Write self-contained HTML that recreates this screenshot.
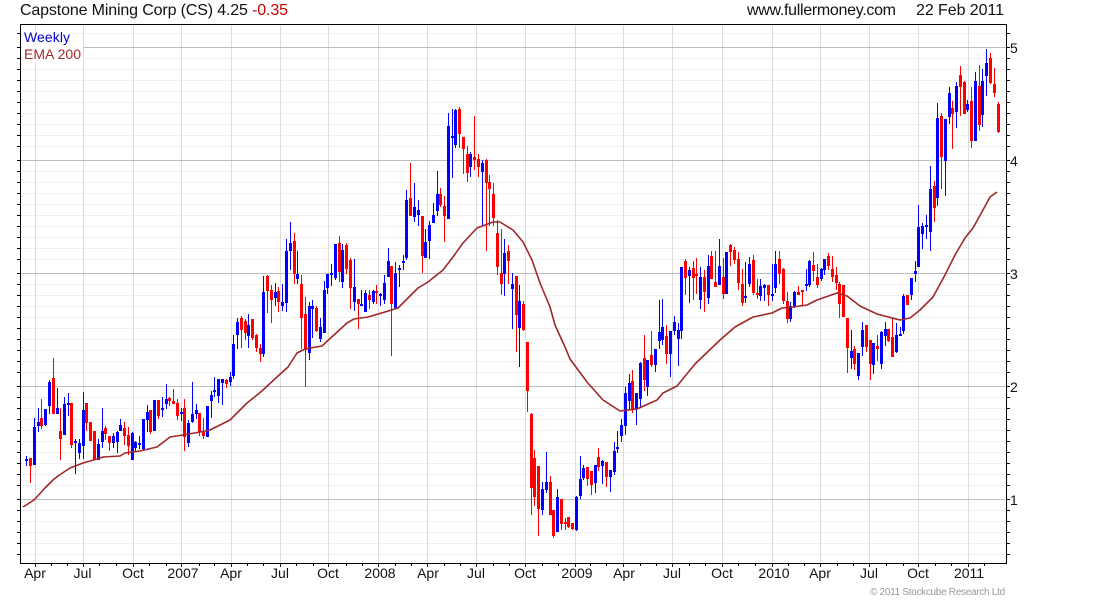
<!DOCTYPE html>
<html lang="en">
<head>
<meta charset="utf-8">
<title>Capstone Mining Corp (CS)</title>
<style>
html,body{margin:0;padding:0;background:#fff;}
body{width:1100px;height:600px;overflow:hidden;position:relative;}
svg{position:absolute;left:0;top:0;display:block;}
text{font-family:"Liberation Sans",Arial,sans-serif;}
</style>
</head>
<body>
<svg width="1100" height="600" viewBox="0 0 1100 600" xmlns="http://www.w3.org/2000/svg">
<rect width="1100" height="600" fill="#fff"/>
<!-- minor horizontals -->
<path fill="none" stroke="#efefef" stroke-width="1" d="M21 33.5H1006M21 58.5H1006M21 69.5H1006M21 80.5H1006M21 91.5H1006M21 102.5H1006M21 113.5H1006M21 124.5H1006M21 135.5H1006M21 146.5H1006M21 171.5H1006M21 182.5H1006M21 193.5H1006M21 204.5H1006M21 215.5H1006M21 226.5H1006M21 237.5H1006M21 248.5H1006M21 259.5H1006M21 284.5H1006M21 295.5H1006M21 306.5H1006M21 317.5H1006M21 328.5H1006M21 339.5H1006M21 350.5H1006M21 361.5H1006M21 372.5H1006M21 397.5H1006M21 408.5H1006M21 419.5H1006M21 430.5H1006M21 441.5H1006M21 452.5H1006M21 463.5H1006M21 474.5H1006M21 485.5H1006M21 510.5H1006M21 521.5H1006M21 532.5H1006M21 543.5H1006M21 554.5H1006"/>
<!-- verticals -->
<path fill="none" stroke="#dcdcdc" stroke-width="1" d="M35.5 25V563M83.5 25V563M133.5 25V563M181.5 25V563M231.5 25V563M280.5 25V563M328.5 25V563M378.5 25V563M427.5 25V563M476.5 25V563M525.5 25V563M575.5 25V563M623.5 25V563M672.5 25V563M722.5 25V563M772.5 25V563M820.5 25V563M869.5 25V563M918.5 25V563M968.5 25V563"/>
<!-- major horizontals -->
<path fill="none" stroke="#bdbdbd" stroke-width="1" d="M21 47.5H1006M21 160.5H1006M21 273.5H1006M21 386.5H1006M21 499.5H1006"/>
<!-- legend backgrounds -->
<rect x="21" y="31" width="49" height="16" fill="#fff"/>
<rect x="21" y="47" width="62" height="15" fill="#fff"/>
<text x="24" y="42" font-size="14" fill="#0000cc" textLength="46">Weekly</text>
<text x="24" y="59" font-size="14" fill="#a52a2a" textLength="57">EMA 200</text>

<!-- wicks -->
<path fill="none" stroke="#0000ff" stroke-width="1" d="M26.5 456V466M34.5 418V465M38.5 408V432M45.5 409V426M49.5 380V414M57.5 388V414M64.5 397V435M68.5 393V416M75.5 439V474M79.5 439V459M83.5 392V459M98.5 439V460M102.5 408V448M113.5 433V448M117.5 431V453M120.5 419V431M132.5 432V460M135.5 441V452M139.5 436V449M143.5 419V451M147.5 405V432M154.5 400V431M162.5 397V417M166.5 384V409M181.5 408V421M188.5 420V447M192.5 382V423M196.5 404V419M207.5 406V437M211.5 391V418M214.5 377V397M218.5 379V403M222.5 379V405M230.5 372V386M233.5 335V379M237.5 318V349M248.5 314V348M263.5 276V357M275.5 283V306M282.5 284V311M286.5 239V312M290.5 222V270M297.5 251V284M309.5 302V360M312.5 300V338M320.5 318V342M324.5 281V333M327.5 274V294M331.5 264V286M335.5 244V280M342.5 244V288M354.5 259V311M361.5 290V306M365.5 290V312M373.5 290V304M380.5 293V306M384.5 275V304M388.5 248V277M395.5 262V308M399.5 265V287M403.5 255V270M406.5 190V260M414.5 183V222M418.5 200V226M425.5 229V258M429.5 221V259M433.5 203V223M437.5 171V216M448.5 113V219M452.5 109V178M455.5 109V148M470.5 152V177M482.5 160V226M504.5 239V296M512.5 273V329M519.5 285V367M542.5 482V515M546.5 452V493M557.5 489V532M576.5 496V531M580.5 456V499M583.5 465V480M595.5 465V493M602.5 460V484M610.5 470V492M614.5 442V475M617.5 431V453M621.5 419V442M625.5 387V435M629.5 374V410M636.5 393V425M640.5 362V408M647.5 360V396M655.5 349V372M659.5 300V349M662.5 299V345M670.5 331V377M674.5 316V335M678.5 323V366M681.5 267V339M689.5 267V303M700.5 267V309M708.5 255V304M719.5 239V285M726.5 252V294M745.5 262V303M749.5 257V287M760.5 279V301M764.5 284V301M772.5 264V301M775.5 251V293M790.5 302V322M794.5 291V308M806.5 269V291M809.5 260V287M821.5 268V281M824.5 259V275M851.5 330V369M858.5 353V380M862.5 322V356M873.5 343V374M881.5 331V369M885.5 322V346M896.5 323V353M900.5 327V336M903.5 294V334M911.5 278V300M915.5 261V282M918.5 205V267M922.5 223V249M926.5 215V239M930.5 166V251M937.5 103V206M945.5 119V196M949.5 87V124M956.5 82V128M967.5 100V112M975.5 72V141M982.5 69V127M986.5 49V96"/>
<path fill="none" stroke="#ff0000" stroke-width="1" d="M30.5 458V483M41.5 399V429M53.5 358V414M60.5 408V460M71.5 403V448M86.5 403V431M90.5 422V441M94.5 431V460M105.5 426V440M109.5 436V451M124.5 422V445M128.5 427V455M150.5 410V434M158.5 400V419M169.5 397V406M173.5 389V404M177.5 399V420M184.5 399V451M199.5 413V436M203.5 418V439M226.5 379V388M241.5 316V348M245.5 319V340M252.5 319V340M256.5 334V352M260.5 344V362M267.5 275V313M271.5 285V323M278.5 287V312M294.5 233V284M301.5 275V349M305.5 297V387M316.5 306V332M339.5 236V282M346.5 243V274M350.5 258V309M358.5 299V329M369.5 290V309M376.5 285V304M391.5 266V356M410.5 163V216M422.5 216V273M440.5 188V207M444.5 196V242M459.5 107V148M463.5 137V174M467.5 146V182M474.5 116V170M478.5 154V177M486.5 159V251M489.5 175V226M493.5 183V226M497.5 220V275M501.5 229V295M508.5 245V284M516.5 276V352M523.5 301V331M527.5 342V412M531.5 413V515M534.5 450V506M538.5 466V536M550.5 476V515M553.5 510V538M561.5 499V530M565.5 518V530M568.5 517V528M572.5 523V530M587.5 467V486M591.5 471V495M598.5 448V471M606.5 462V487M632.5 370V413M644.5 335V391M651.5 331V367M666.5 325V364M685.5 259V295M693.5 261V300M696.5 258V294M704.5 270V312M711.5 251V279M715.5 251V287M723.5 258V299M730.5 244V266M734.5 247V264M738.5 252V290M742.5 269V306M753.5 255V295M757.5 279V299M768.5 285V306M779.5 251V284M783.5 268V304M787.5 292V323M798.5 286V295M802.5 290V306M813.5 252V281M817.5 264V288M828.5 253V270M832.5 256V282M836.5 267V290M839.5 282V318M843.5 285V317M847.5 318V373M854.5 346V370M866.5 325V352M870.5 340V380M877.5 335V361M888.5 329V342M892.5 318V357M907.5 295V305M934.5 181V222M941.5 113V189M952.5 101V149M960.5 66V116M964.5 81V114M971.5 87V148M979.5 65V131M990.5 53V84M994.5 68V97M998.5 102V133"/>
<!-- bodies -->
<path fill="none" stroke="#0000ff" stroke-width="3" d="M26.5 459V461M34.5 427V465M38.5 422V426M45.5 409V425M49.5 382V406M57.5 408V414M64.5 404V435M68.5 403V405M75.5 441V443M79.5 443V453M83.5 410V446M98.5 444V460M102.5 431V442M113.5 436V443M117.5 432V442M120.5 425V431M132.5 433V460M135.5 442V448M139.5 443V445M143.5 419V449M147.5 412V420M154.5 400V431M162.5 408V410M166.5 399V404M181.5 412V414M188.5 423V443M192.5 414V422M196.5 410V414M207.5 406V437M211.5 395V401M214.5 390V392M218.5 379V396M222.5 379V383M230.5 377V382M233.5 344V376M237.5 322V335M248.5 325V336M263.5 292V354M275.5 292V298M282.5 302V306M286.5 251V303M290.5 243V251M297.5 274V279M309.5 306V353M312.5 306V309M320.5 327V339M324.5 290V333M327.5 274V288M331.5 273V275M335.5 244V278M342.5 250V282M354.5 287V302M361.5 304V306M365.5 293V312M373.5 291V302M380.5 294V296M384.5 283V300M388.5 261V277M395.5 273V308M399.5 268V270M403.5 261V263M406.5 200V258M414.5 207V217M418.5 210V215M425.5 242V258M429.5 225V241M433.5 215V223M437.5 194V211M448.5 126V219M452.5 136V138M455.5 110V145M470.5 154V167M482.5 163V172M504.5 253V274M512.5 284V289M519.5 301V328M542.5 489V510M546.5 482V490M557.5 497V532M576.5 497V530M580.5 479V496M583.5 468V478M595.5 465V483M602.5 461V466M610.5 470V477M614.5 451V472M617.5 447V449M621.5 425V436M625.5 393V426M629.5 383V401M636.5 393V409M640.5 363V399M647.5 360V387M655.5 349V365M659.5 332V341M662.5 327V340M670.5 331V354M674.5 322V331M678.5 330V339M681.5 267V331M689.5 270V276M700.5 277V300M708.5 266V298M719.5 266V285M726.5 252V294M745.5 296V298M749.5 264V284M760.5 286V296M764.5 285V288M772.5 294V296M775.5 264V288M790.5 306V319M794.5 292V307M806.5 284V286M809.5 261V285M821.5 269V279M824.5 259V270M851.5 351V358M858.5 353V376M862.5 330V347M873.5 343V365M881.5 332V364M885.5 329V336M896.5 335V352M900.5 334V336M903.5 296V331M911.5 278V295M915.5 271V274M918.5 227V267M922.5 226V234M926.5 225V227M930.5 189V232M937.5 118V198M945.5 119V161M949.5 93V117M956.5 86V112M967.5 104V110M975.5 81V141M982.5 81V115M986.5 63V76"/>
<path fill="none" stroke="#ff0000" stroke-width="3" d="M30.5 458V466M41.5 418V426M53.5 378V414M60.5 431V439M71.5 403V445M86.5 403V423M90.5 422V441M94.5 431V460M105.5 428V434M109.5 436V443M124.5 428V436M128.5 435V446M150.5 410V432M158.5 400V416M169.5 398V401M173.5 401V404M177.5 403V416M184.5 408V437M199.5 413V432M203.5 432V436M226.5 380V384M241.5 318V330M245.5 321V333M252.5 319V338M256.5 335V348M260.5 348V354M267.5 276V291M271.5 290V300M278.5 291V302M294.5 241V274M301.5 284V318M305.5 314V350M316.5 308V331M339.5 243V272M346.5 245V269M350.5 260V288M358.5 299V304M369.5 295V300M376.5 291V293M391.5 266V304M410.5 198V216M422.5 216V256M440.5 194V205M444.5 206V216M459.5 109V134M463.5 137V149M467.5 154V173M474.5 157V160M478.5 159V167M486.5 160V183M489.5 182V189M493.5 194V218M497.5 233V267M501.5 273V284M508.5 251V261M516.5 276V315M523.5 304V330M527.5 342V391M531.5 414V488M534.5 458V497M538.5 466V509M550.5 482V515M553.5 510V536M561.5 499V524M565.5 522V524M568.5 517V527M572.5 523V529M587.5 467V479M591.5 471V485M598.5 457V467M606.5 462V477M632.5 381V410M644.5 358V380M651.5 355V365M666.5 336V354M685.5 261V278M693.5 268V278M696.5 274V276M704.5 277V292M711.5 256V279M715.5 282V287M723.5 277V294M730.5 245V252M734.5 250V260M738.5 259V283M742.5 284V303M753.5 260V293M757.5 293V295M768.5 285V295M779.5 259V274M783.5 269V301M787.5 301V319M798.5 292V295M802.5 290V292M813.5 265V271M817.5 277V285M828.5 256V266M832.5 269V277M836.5 275V283M839.5 284V304M843.5 285V317M847.5 318V348M854.5 349V364M866.5 325V347M870.5 340V364M877.5 346V349M888.5 329V341M892.5 337V357M907.5 295V305M934.5 186V208M941.5 116V157M952.5 108V114M960.5 75V87M964.5 82V114M971.5 101V141M979.5 86V125M990.5 58V83M994.5 84V93M998.5 104V132"/>
<!-- EMA -->
<polyline fill="none" stroke="#a0282a" stroke-width="1.6" stroke-linejoin="round" points="23,507 34,500 45,488 53,480 58,476 70,468 83,463 97,459 103,457 120,456 125,453 140,451 157,447 170,437 183,435 200,432 210,430 230,420 247,403 257,395 263,390 277,377 288,367 297,353 305,349 322,346 335,334 347,323 354,319 368,317 385,312 398,308 408,298 418,288 428,282 443,270 453,257 463,243 477,228 493,222 500,222 513,230 523,242 532,260 540,283 550,307 555,325 565,347 570,359 587,382 603,400 620,411 637,409 657,400 663,393 677,386 695,364 720,340 735,327 753,317 772,313 782,308 793,307 807,305 817,300 837,293 847,296 860,306 877,314 900,320 910,318 920,310 933,297 945,275 955,255 965,238 973,228 983,210 990,197 997,192"/>
<!-- frame -->
<rect x="20.5" y="24.5" width="986" height="539" fill="none" stroke="#000" stroke-width="1"/>
<!-- y ticks -->
<path fill="none" stroke="#000" stroke-width="1" d="M17 33.5h3M17 47.5h3M17 58.5h3M17 69.5h3M17 80.5h3M17 91.5h3M17 102.5h3M17 113.5h3M17 124.5h3M17 135.5h3M17 146.5h3M17 160.5h3M17 171.5h3M17 182.5h3M17 193.5h3M17 204.5h3M17 215.5h3M17 226.5h3M17 237.5h3M17 248.5h3M17 259.5h3M17 273.5h3M17 284.5h3M17 295.5h3M17 306.5h3M17 317.5h3M17 328.5h3M17 339.5h3M17 350.5h3M17 361.5h3M17 372.5h3M17 386.5h3M17 397.5h3M17 408.5h3M17 419.5h3M17 430.5h3M17 441.5h3M17 452.5h3M17 463.5h3M17 474.5h3M17 485.5h3M17 499.5h3M17 510.5h3M17 521.5h3M17 532.5h3M17 543.5h3M17 554.5h3M1007 33.5h3M1007 47.5h3M1007 58.5h3M1007 69.5h3M1007 80.5h3M1007 91.5h3M1007 102.5h3M1007 113.5h3M1007 124.5h3M1007 135.5h3M1007 146.5h3M1007 160.5h3M1007 171.5h3M1007 182.5h3M1007 193.5h3M1007 204.5h3M1007 215.5h3M1007 226.5h3M1007 237.5h3M1007 248.5h3M1007 259.5h3M1007 273.5h3M1007 284.5h3M1007 295.5h3M1007 306.5h3M1007 317.5h3M1007 328.5h3M1007 339.5h3M1007 350.5h3M1007 361.5h3M1007 372.5h3M1007 386.5h3M1007 397.5h3M1007 408.5h3M1007 419.5h3M1007 430.5h3M1007 441.5h3M1007 452.5h3M1007 463.5h3M1007 474.5h3M1007 485.5h3M1007 499.5h3M1007 510.5h3M1007 521.5h3M1007 532.5h3M1007 543.5h3M1007 554.5h3"/>
<!-- x ticks -->
<path fill="none" stroke="#000" stroke-width="1" d="M35.5 564v3M51.5 564v2M67.5 564v2M83.5 564v3M99.5 564v2M116.5 564v2M133.5 564v3M149.5 564v2M166.5 564v2M181.5 564v3M199.5 564v2M214.5 564v2M231.5 564v3M247.5 564v2M263.5 564v2M280.5 564v3M296.5 564v2M313.5 564v2M328.5 564v3M346.5 564v2M362.5 564v2M378.5 564v3M395.5 564v2M411.5 564v2M427.5 564v3M444.5 564v2M460.5 564v2M476.5 564v3M493.5 564v2M509.5 564v2M525.5 564v3M542.5 564v2M558.5 564v2M575.5 564v3M590.5 564v2M606.5 564v2M623.5 564v3M640.5 564v2M656.5 564v2M672.5 564v3M689.5 564v2M705.5 564v2M722.5 564v3M738.5 564v2M755.5 564v2M772.5 564v3M788.5 564v2M804.5 564v2M820.5 564v3M837.5 564v2M853.5 564v2M869.5 564v3M886.5 564v2M903.5 564v2M918.5 564v3M935.5 564v2M951.5 564v2M968.5 564v3M984.5 564v2"/>
<!-- header -->
<text x="20" y="15" font-size="16" fill="#111" textLength="268">Capstone Mining Corp (CS) 4.25 <tspan fill="#cc0000">-0.35</tspan></text>
<text x="747" y="15" font-size="16" fill="#111" textLength="149">www.fullermoney.com</text>
<text x="916" y="15" font-size="16" fill="#111" textLength="88">22 Feb 2011</text>
<!-- y labels -->
<g font-size="14" fill="#111">
<text x="1010" y="53">5</text>
<text x="1010" y="166">4</text>
<text x="1010" y="279">3</text>
<text x="1010" y="392">2</text>
<text x="1010" y="505">1</text>
</g>
<!-- x labels -->
<g font-size="14" fill="#111" text-anchor="middle">
<text x="35" y="578">Apr</text>
<text x="82.5" y="578">Jul</text>
<text x="133" y="578">Oct</text>
<text x="183" y="578">2007</text>
<text x="231" y="578">Apr</text>
<text x="280" y="578">Jul</text>
<text x="328" y="578">Oct</text>
<text x="380" y="578">2008</text>
<text x="428" y="578">Apr</text>
<text x="476" y="578">Jul</text>
<text x="525" y="578">Oct</text>
<text x="577" y="578">2009</text>
<text x="624" y="578">Apr</text>
<text x="672" y="578">Jul</text>
<text x="722" y="578">Oct</text>
<text x="774" y="578">2010</text>
<text x="820" y="578">Apr</text>
<text x="869" y="578">Jul</text>
<text x="918" y="578">Oct</text>
<text x="969" y="578">2011</text>
</g>
<text x="870" y="595" font-size="10" fill="#999" textLength="135">© 2011 Stockcube Research Ltd</text>
</svg>
</body>
</html>
